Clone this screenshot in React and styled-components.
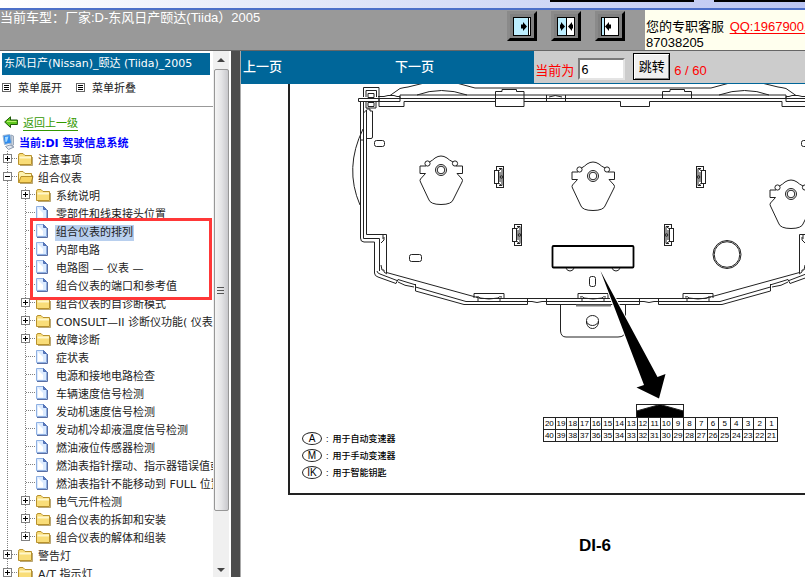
import React from "react";
import styled, { createGlobalStyle } from "styled-components";

const GlobalStyle = createGlobalStyle`
  * {
    box-sizing: border-box;
  }

  body {
    margin: 0;
    background: #ffffff;
    color: #222222;
    font-family: "DejaVu Sans", "Noto Sans CJK SC", sans-serif;
    font-size: 11px;
  }

  ul {
    margin: 0;
    padding: 0;
    list-style: none;
  }

  svg {
    display: block;
    flex: none;
  }
`;

const Page = styled.div`
  display: flex;
  flex-direction: column;
  height: 100vh;
  overflow: hidden;
`;

const WindowStrip = styled.div`
  display: flex;
  flex: none;
  justify-content: flex-end;
  gap: 20px;
  height: 10px;
  border-bottom: 2px solid #4c6fc8;
  background: linear-gradient(to right, #ffffff, #e8ecfa 30%, #bcc6f2);
`;

const RedactedBar = styled.span`
  width: ${({ $width }) => $width}px;
  height: 2px;
  background: #000000;
`;

const TopBar = styled.header`
  display: flex;
  flex: none;
  height: 41px;
  border-bottom: 1px solid #666666;
  background: #999999;
`;

const CarTitle = styled.h1`
  flex: 1;
  margin: 0;
  color: #ffffff;
  font-family: "Liberation Sans", "Noto Sans CJK SC", sans-serif;
  font-size: 13px;
  font-weight: 400;
  line-height: 16px;
  white-space: nowrap;
`;

const PaneButtons = styled.div`
  display: flex;
  gap: 14px;
  padding: 1px 20px 0 0;
`;

const PaneButton = styled.button`
  display: flex;
  align-items: center;
  justify-content: center;
  width: 30px;
  height: 30px;
  padding: 0;
  border: 3px solid;
  border-color: #8a8a8a #000000 #000000 #8a8a8a;
  background: #808080;
`;

const Contact = styled.div`
  width: 160px;
  padding: 9px 0 0 1px;
  overflow: hidden;
  background: #ffffee;
  color: #000000;
  font-family: "Liberation Sans", "Noto Sans CJK SC", sans-serif;
  font-size: 13px;
  line-height: 16px;
  white-space: nowrap;

  a {
    margin-left: 2px;
    color: #ff0000;
    text-underline-offset: 2px;
  }
`;

const Body = styled.div`
  display: flex;
  flex: 1;
  min-height: 0;
`;

const Sidebar = styled.nav`
  display: flex;
  flex: none;
  width: 231px;
`;

const SidebarContent = styled.div`
  flex: none;
  width: 213px;
  padding-top: 2px;
  overflow: hidden;
`;

const SidebarTitle = styled.h2`
  height: 22px;
  margin: 0 3px 0 2px;
  padding-left: 2px;
  background: #006699;
  color: #ffffff;
  font-size: 11px;
  font-weight: 400;
  line-height: 22px;
  white-space: nowrap;
`;

const MenuActions = styled.div`
  display: flex;
  gap: 14px;
  height: 32px;
  padding: 3px 2px 0;
  border-bottom: 1px solid #999999;
`;

const MenuAction = styled.button`
  display: flex;
  align-items: center;
  gap: 7px;
  height: 18px;
  padding: 0;
  border: 0;
  background: none;
  color: #222222;
  font: inherit;
`;

const Tree = styled.ul`
  padding-top: 4px;
`;

const BackLink = styled.a`
  display: flex;
  align-items: center;
  gap: 5px;
  height: 22px;
  padding-left: 4px;
  color: #339900;
  text-underline-offset: 3px;
`;

const CurrentNode = styled.div`
  display: flex;
  align-items: center;
  gap: 3px;
  height: 18px;
  padding-left: 2px;
  color: #0000ff;
  font-weight: 700;
  white-space: nowrap;
`;

const Row = styled.div`
  display: flex;
  align-items: center;
  height: 18px;
  white-space: nowrap;
`;

const Toggle = styled.button`
  width: 18px;
  height: 18px;
  padding: 0;
  border: 0;
  background: none;
`;

const NodeLink = styled.a`
  flex: none;
  margin: 2px 0 0 1px;
  padding: 0 1px;
  background: ${({ $active }) => ($active ? "#b8cfee" : "none")};
  color: #222222;
  line-height: 16px;
  text-decoration: none;
`;

const MarkedGroup = styled.ul`
  position: relative;

  &::after {
    content: "";
    position: absolute;
    top: -5px;
    right: 1px;
    bottom: -5px;
    left: 30px;
    border: 3px solid #ff3838;
    pointer-events: none;
  }
`;

const ScrollTrack = styled.div`
  display: flex;
  flex-direction: column;
  align-items: center;
  width: 16px;
  background: #f0f0f0;
`;

const ScrollEnd = styled.div`
  display: flex;
  flex: none;
  align-items: center;
  justify-content: center;
  width: 16px;
  height: 18px;

  &:last-child {
    height: 14px;
    margin-top: auto;
  }
`;

const ScrollThumb = styled.div`
  display: flex;
  flex: 0 1 84%;
  align-items: center;
  justify-content: center;
  width: 15px;
  border: 1px solid #979797;
  border-radius: 2px;
  background: linear-gradient(to right, #f5f5f5, #e4e4e6 50%, #c8c8cc);
`;

const Splitter = styled.div`
  flex: none;
  width: 10px;
  border-right: 1px solid #aaaaaa;
  background: #4d4d4d;
`;

const Viewer = styled.main`
  display: flex;
  flex: 1;
  flex-direction: column;
  min-width: 0;
  overflow: hidden;
`;

const Pager = styled.div`
  display: flex;
  flex: none;
  height: 33px;
  border-bottom: 1px solid #006699;
  background: #cccccc;
  font-size: 13px;
`;

const PagerLinks = styled.div`
  display: flex;
  flex: 0 0 52%;
  gap: 113px;
  padding-left: 2px;
  background: #006699;

  a {
    color: #ffffff;
    font-weight: 500;
    line-height: 31px;
    text-decoration: none;
    white-space: nowrap;
  }
`;

const JumpForm = styled.form`
  display: flex;
  align-items: flex-end;
  gap: 4px;
  padding: 0 0 3px 1px;
  color: #ff0000;
  font-family: "Liberation Sans", "Noto Sans CJK SC", sans-serif;
  line-height: 18px;
  white-space: nowrap;
`;

const PageInput = styled.input`
  width: 47px;
  height: 22px;
  padding: 0 1px;
  border: 2px solid;
  border-color: #7a7a7a #e4e4e4 #e4e4e4 #7a7a7a;
  background: #ffffff;
  color: #000000;
  font-family: "DejaVu Sans Condensed", sans-serif;
  font-size: 13px;
`;

const JumpButton = styled.button`
  width: 37px;
  height: 27px;
  margin-left: 4px;
  padding: 0 0 2px;
  border: 1px solid #000000;
  background: #f0f0f0;
  box-shadow: inset 1px 1px #ffffff, inset -1px -1px #808080;
  color: #000000;
  font-family: "Noto Sans CJK SC", sans-serif;
  font-size: 13px;
`;

const Manual = styled.article`
  width: 610px;
  margin-left: 47px;
  color: #000000;
  font-family: "Liberation Sans", "Noto Sans CJK SC", sans-serif;
`;

const Figure = styled.figure`
  height: 411px;
  margin: 0;
  border: 2px solid #222222;
  border-top: 0;
`;

const FigureNotes = styled.div`
  display: flex;
  align-items: flex-start;
  gap: 132px;
  padding-left: 12px;
`;

const Legend = styled.ul`
  width: 109px;
  padding-top: 13px;

  li {
    display: flex;
    align-items: center;
    height: 17px;
    font-size: 9px;
    font-weight: 500;
    white-space: nowrap;
  }
`;

const Mark = styled.span`
  width: 20px;
  height: 13px;
  margin-right: 4px;
  border: 1px solid #222222;
  border-radius: 50%;
  font-size: 10px;
  font-weight: 400;
  line-height: 11px;
  text-align: center;
`;

const Meaning = styled.span`
  margin-left: 4px;
`;

const PinTable = styled.table`
  width: 235px;
  table-layout: fixed;
  border-collapse: collapse;
  font-size: 8px;
  line-height: 11px;

  td {
    height: 12px;
    padding: 0;
    border: 1px solid #222222;
    text-align: center;
  }
`;

const PageNumber = styled.p`
  margin: 41px 0 0;
  padding-left: 4px;
  font-size: 17px;
  font-weight: 700;
  line-height: 20px;
  text-align: center;
`;

const nodes = [
  { label: "注意事项", kind: "closed", level: 0 },
  { label: "组合仪表", kind: "open", level: 0 },
  { label: "系统说明", kind: "closed", level: 1 },
  { label: "零部件和线束接头位置", kind: "doc", level: 1 },
];

const markedNodes = [
  { label: "组合仪表的排列", kind: "doc", level: 1, active: true },
  { label: "内部电路", kind: "doc", level: 1 },
  { label: "电路图 — 仪表 —", kind: "doc", level: 1 },
  { label: "组合仪表的端口和参考值", kind: "doc", level: 1 },
];

const moreNodes = [
  { label: "组合仪表的自诊断模式", kind: "closed", level: 1 },
  { label: "CONSULT—II 诊断仪功能( 仪表 )", kind: "closed", level: 1 },
  { label: "故障诊断", kind: "closed", level: 1 },
  { label: "症状表", kind: "doc", level: 1 },
  { label: "电源和接地电路检查", kind: "doc", level: 1 },
  { label: "车辆速度信号检测", kind: "doc", level: 1 },
  { label: "发动机速度信号检测", kind: "doc", level: 1 },
  { label: "发动机冷却液温度信号检测", kind: "doc", level: 1 },
  { label: "燃油液位传感器检测", kind: "doc", level: 1 },
  { label: "燃油表指针摆动、指示器错误值或", kind: "doc", level: 1 },
  { label: "燃油表指针不能移动到 FULL 位置", kind: "doc", level: 1 },
  { label: "电气元件检测", kind: "closed", level: 1 },
  { label: "组合仪表的拆卸和安装", kind: "closed", level: 1 },
  { label: "组合仪表的解体和组装", kind: "closed", level: 1, last: true },
  { label: "警告灯", kind: "closed", level: 0 },
  { label: "A/T 指示灯", kind: "closed", level: 0 },
];

const legend = [
  ["A", "用于自动变速器"],
  ["M", "用于手动变速器"],
  ["IK", "用于智能钥匙"],
];

const pinRows = [20, 40].map((first) =>
  Array.from({ length: 20 }, (_, i) => first - i)
);

const Guide = ({ branch, box, open, last }) => (
  <svg width="18" height="18" viewBox="0 0 18 18" fill="none">
    <path
      d={last ? "M7.5 0V8" : "M7.5 0V18"}
      stroke="#808080"
      strokeDasharray="1 1"
    />
    {branch && <path d="M8 7.5H18" stroke="#808080" strokeDasharray="1 1" />}
    {box && (
      <>
        <rect x="3.5" y="3.5" width="8" height="8" fill="#fff" stroke="#808080" />
        <path d={open ? "M5 7.5H10" : "M5 7.5H10M7.5 5V10"} stroke="#000" />
      </>
    )}
  </svg>
);

const FolderIcon = ({ open }) => (
  <svg width="18" height="18" viewBox="0 0 18 18">
    <path
      d="M.5 4.500Q.5 2.500 2 2.500H5L7 4.500H13.500V13.500H.5Z"
      fill={open ? "#fff3b0" : "#f9dd78"}
      stroke="#b8912c"
    />
    {open ? (
      <path d="M3 7.500H15L13 13.500H.8Z" fill="#f7d35f" stroke="#b8912c" />
    ) : (
      <path d="M1.500 6.500H13" stroke="#fff6c9" strokeWidth="2" />
    )}
    <path d="M2 14.500H14.500V6" fill="none" stroke="#8b6a18" strokeOpacity=".6" />
  </svg>
);

const DocIcon = () => (
  <svg width="18" height="18" viewBox="0 0 18 18">
    <path d="M.5 1.500H7.500L10.500 4.500V13.500H.5Z" fill="#dcebff" stroke="#8fb0e2" />
    <path d="M2 12.500V3L7 8V12.500Z" fill="#fff" />
    <path d="M7.500 1.500V4.500H10.500Z" fill="#5d80c4" stroke="#4f6fb5" />
    <path d="M1 14.500H11.500V5" fill="none" stroke="#5a6fa4" />
  </svg>
);

const ListIcon = () => (
  <svg width="9" height="9" viewBox="0 0 9 9">
    <rect x=".5" y=".5" width="8" height="8" fill="#fff" stroke="#666" />
    <path d="M2 2.500H7M2 4.500H7M2 6.500H7" stroke="#000" />
  </svg>
);

const BackIcon = () => (
  <svg width="14" height="12" viewBox="0 0 14 12">
    <path
      d="M.7 6L6.500.8V4H13.400V8.500H6.500V11.500Z"
      fill="#5ec81e"
      stroke="#1e5a08"
    />
    <path d="M3 5.500H12.500" stroke="#b8f06c" />
  </svg>
);

const ComputerIcon = () => (
  <svg width="14" height="16" viewBox="0 0 14 16">
    <path d="M9 1L11.500 2V11L9 12Z" fill="#c9d2de" stroke="#9aa8ba" />
    <path d="M1 1.500L8 .5L9.500 9L2.500 10.500Z" fill="#2f8cf0" stroke="#9db5cf" />
    <path d="M3 3L6.500 2.500L5 7.500L3.500 8Z" fill="#a8dcff" />
    <path d="M3.500 12.500L8 11L12 13L6.500 15.500Z" fill="#e2e8f0" stroke="#8b99ae" />
  </svg>
);

const PaneIcon = ({ kind }) => (
  <svg width="18" height="19" viewBox="0 0 18 19">
    <rect x=".5" y=".5" width="17" height="18" fill="#fff" stroke="#000" />
    {kind === "left" && (
      <>
        <path d="M1 1H15V18H1Z" fill="#bdeeff" />
        <path d="M15.500 1V18" stroke="#000" />
        <path d="M8 7.500H10V5L14 9.500L10 14V11.500H8Z" />
      </>
    )}
    {kind === "both" && (
      <>
        <path d="M1 1H9V18H1Z" fill="#bdeeff" />
        <path d="M9.500 1V18" stroke="#000" />
        <path d="M3 7.500H4V5L8 9.500L4 14V11.500H3ZM16 7.500H15V5L11 9.500L15 14V11.500H16Z" />
      </>
    )}
    {kind === "right" && (
      <>
        <path d="M1 1H3V18H1Z" fill="#bdeeff" />
        <path d="M3.500 1V18" stroke="#000" />
        <path d="M10 7.500H8V5L4 9.500L8 14V11.500H10Z" />
      </>
    )}
  </svg>
);

// Gauge motor, drawn around its shaft
const Gauge = ({ x, y }) => (
  <g transform={`translate(${x} ${y})`}>
    <circle r="5.500" />
    <circle r="3.800" />
    <path d="M-11.500-8Q-8-10-6-12Q0-16 6-12Q8-10 12-8" />
    <circle cx="-13.500" cy="-6.500" r="2.600" />
    <circle cx="14" cy="-6.500" r="2.600" />
    <path d="M-15-4H-21V3.500H-15.500L-20.500 9Q-21.500 10.500-20.500 12L-12.500 29Q-11 34.500 0 34.500Q11 34.500 12.500 29L21 12Q22 10.500 21 9L16 3.500H21.500V-4H15" />
  </g>
);

const Clip = ({ x, y, flip }) => (
  <g transform={`translate(${x} ${y}) scale(${flip ? -1 : 1} 1)`}>
    <rect x="-2.500" y="-10.500" width="7" height="21" />
    <rect x="-4.500" y="-6.500" width="4" height="13" fill="#fff" />
    <path d="M0-8.500H3V8.500H0M-.5-6L2-8M-.5 6L2 8M1-5V5" />
    <circle cx="2.500" cy="0" r="1.300" />
  </g>
);

const BottomLug = ({ x }) => (
  <path
    transform={`translate(${x} 0)`}
    d="M-15 298V293.500H15V298M-13 297Q-10 296-9 298Q0 300 9 298Q10 296 13 297M-11 298V301.500H11V298"
  />
);

// Left half of the cluster housing; the right half is its mirror
const HousingHalf = () => (
  <g>
    <path d="M390 95.500L400 88.500Q404 87.500 408 87Q441 76 475 88H593" />
    <path d="M417 95Q441 86 467 95M400 95H593M379 98.500H593" />
    <path d="M378 96.500H384L388 95.500H394L397 96.500H400V101.500H378M400 95V98" />
    <path d="M363.500 97V87.500H379V106.500H404V101.500H495" />
    <path d="M366 97V90.500H376.500V97M358.500 98.500H379V101.500H358.500ZM366 102V108H376V102" />
    <path d="M368 93.500H374V97.500H368ZM368 102.500H374V106.500H368Z" />
    <path d="M366.500 109H370V111H372.500V137Q372.500 138.500 371 138.500H366.500M360.500 140H363.500" />
    <path d="M366.500 138V234.500H386.500V273M366.500 138V110L363.500 113M363.500 102V238.500H379.500V271" />
    <path d="M360.500 102V238Q360.500 242 364 242H374.500V273Q374.500 276 378 277L396 283.500" />
    <path d="M363 129Q344 168 360 205" />
    <path d="M384 237V240L381 243M383 235V239M381 265L382 270H384V272L387 274" />
    <path d="M377 271Q377 273 380 274L397 280.500M386.500 272.500L481 298.500H593" />
    <path d="M396 283.500L398 279.500L416 285M398 282Q404 286 414 287M415.500 284V291L464 304.500H527.500V298.500M415.500 287L466 301.500H527.500" />
    <path d="M527.500 301.500H532Q537 303.500 542 301.500H546.500M546.500 298.500V304.500H593M546.500 301.500H593" />
    <rect x="374.500" y="140.500" width="10" height="6" rx="2" />
  </g>
);

const ClusterDrawing = () => (
  <svg
    width="606"
    height="333"
    viewBox="290 84 606 333"
    fill="none"
    stroke="#222222"
    role="img"
    aria-label="组合仪表的排列"
  >
    <HousingHalf />
    <g transform="translate(1186 0) scale(-1 1)">
      <HousingHalf />
    </g>

    <path d="M495.500 106.500V91.500H502V89.500H516.500V91.500H524V106.500Z" />
    <path d="M524 101.500H620.500V106.500H649.500V101.500H693M662.500 98V91.500H670V89.500H684.500V91.500H691.500V98" />
    <path d="M546.500 95V102M565.500 95V102M549 97Q555 94 562 97" />

    <Gauge x={441} y={170} />
    <Gauge x={593} y={176} />
    <Gauge x={791} y={194} />
    <Clip x={499} y={177} />
    <Clip x={517} y={235} />
    <Clip x={701} y={177} flip />
    <Clip x={669} y={235} flip />
    <rect x="409.500" y="254.500" width="12" height="7" rx="2" />
    <rect x="589.500" y="276.500" width="6" height="10" rx="2" />
    <circle cx="727" cy="254.500" r="14" />
    <circle cx="727" cy="254.500" r="12.800" />

    <rect x="552.500" y="246" width="81" height="21.500" rx="1" stroke="#000" strokeWidth="1.800" />
    <path d="M566 268Q567 271 570 271Q573 271 574 268M612 268Q613 271 616 271Q619 271 620 268" />

    <BottomLug x={489} />
    <BottomLug x={593} />
    <BottomLug x={698} />
    <path d="M560.500 304V331Q561 337 566 337H618Q625 337 625.500 331V304" />
    <path d="M576 305.500H611" stroke="#777" strokeWidth="2" />
    <path d="M586.500 321V323Q588 328.500 592.500 328.500Q597 328.500 598.500 323V321" />
    <ellipse cx="592.500" cy="320.500" rx="6" ry="5" />

    <path
      d="M600.500 271L657.500 377L665.500 374L659 398.500L636.500 387.500L644 385Z"
      fill="#000"
      stroke="#fff"
      strokeWidth="2"
      paintOrder="stroke"
    />
    <rect x="636.500" y="404.500" width="47" height="14" fill="#fff" />
    <path d="M636.500 411L660 404.500L683.500 411V418H636.500Z" fill="#000" />
  </svg>
);

const TreeNode = ({ label, kind, level, active, last }) => (
  <li>
    <Row>
      {level === 1 && <Guide />}
      {kind === "doc" ? (
        <Guide branch last={last} />
      ) : (
        <Toggle type="button" aria-label={`展开 ${label}`}>
          <Guide branch box open={kind === "open"} last={last} />
        </Toggle>
      )}
      {kind === "doc" ? <DocIcon /> : <FolderIcon open={kind === "open"} />}
      <NodeLink href="#node" $active={active}>
        {label}
      </NodeLink>
    </Row>
  </li>
);

const App = () => {
  return (
    <Page>
      <GlobalStyle />
      <WindowStrip>
        <RedactedBar $width={144} />
        <RedactedBar $width={91} />
      </WindowStrip>

      <TopBar>
        <CarTitle>当前车型：厂家:D-东风日产颐达(Tiida）2005</CarTitle>
        <PaneButtons>
          <PaneButton type="button" aria-label="展开左栏">
            <PaneIcon kind="left" />
          </PaneButton>
          <PaneButton type="button" aria-label="左右并排">
            <PaneIcon kind="both" />
          </PaneButton>
          <PaneButton type="button" aria-label="收起左栏">
            <PaneIcon kind="right" />
          </PaneButton>
        </PaneButtons>
        <Contact>
          您的专职客服 <a href="#qq">QQ:19679001</a>
          <br />
          87038205
        </Contact>
      </TopBar>

      <Body>
        <Sidebar>
          <SidebarContent>
            <SidebarTitle>东风日产(Nissan)_颐达 (Tiida)_2005</SidebarTitle>
            <MenuActions>
              <MenuAction type="button">
                <ListIcon />
                菜单展开
              </MenuAction>
              <MenuAction type="button">
                <ListIcon />
                菜单折叠
              </MenuAction>
            </MenuActions>
            <Tree>
              <li>
                <BackLink href="#back">
                  <BackIcon />
                  返回上一级
                </BackLink>
              </li>
              <li>
                <CurrentNode>
                  <ComputerIcon />
                  当前:DI 驾驶信息系统
                </CurrentNode>
              </li>
              {nodes.map((node) => (
                <TreeNode key={node.label} {...node} />
              ))}
              <li>
                <MarkedGroup>
                  {markedNodes.map((node) => (
                    <TreeNode key={node.label} {...node} />
                  ))}
                </MarkedGroup>
              </li>
              {moreNodes.map((node) => (
                <TreeNode key={node.label} {...node} />
              ))}
            </Tree>
          </SidebarContent>
          <ScrollTrack>
            <ScrollEnd>
              <svg width="8" height="4" viewBox="0 0 8 4">
                <path d="M0 4L4 0L8 4Z" fill="#444" />
              </svg>
            </ScrollEnd>
            <ScrollThumb>
              <svg width="8" height="8" viewBox="0 0 8 8">
                <path d="M0 1.500H7M0 4.500H7M0 7.500H7" stroke="#555" />
              </svg>
            </ScrollThumb>
            <ScrollEnd>
              <svg width="8" height="4" viewBox="0 0 8 4">
                <path d="M0 0L4 4L8 0Z" fill="#444" />
              </svg>
            </ScrollEnd>
          </ScrollTrack>
        </Sidebar>

        <Splitter />

        <Viewer>
          <Pager>
            <PagerLinks>
              <a href="#prev">上一页</a>
              <a href="#next">下一页</a>
            </PagerLinks>
            <JumpForm>
              <label htmlFor="page">当前为</label>
              <PageInput id="page" type="text" defaultValue="6" />
              <JumpButton type="button">跳转</JumpButton>
              <span>6 / 60</span>
            </JumpForm>
          </Pager>

          <Manual>
            <Figure>
              <ClusterDrawing />
              <FigureNotes>
                <Legend>
                  {legend.map(([mark, text]) => (
                    <li key={mark}>
                      <Mark>{mark}</Mark>:<Meaning>{text}</Meaning>
                    </li>
                  ))}
                </Legend>
                <PinTable>
                  <tbody>
                    {pinRows.map((pins) => (
                      <tr key={pins[0]}>
                        {pins.map((pin) => (
                          <td key={pin}>{pin}</td>
                        ))}
                      </tr>
                    ))}
                  </tbody>
                </PinTable>
              </FigureNotes>
            </Figure>
            <PageNumber>DI-6</PageNumber>
          </Manual>
        </Viewer>
      </Body>
    </Page>
  );
};

export default App;
